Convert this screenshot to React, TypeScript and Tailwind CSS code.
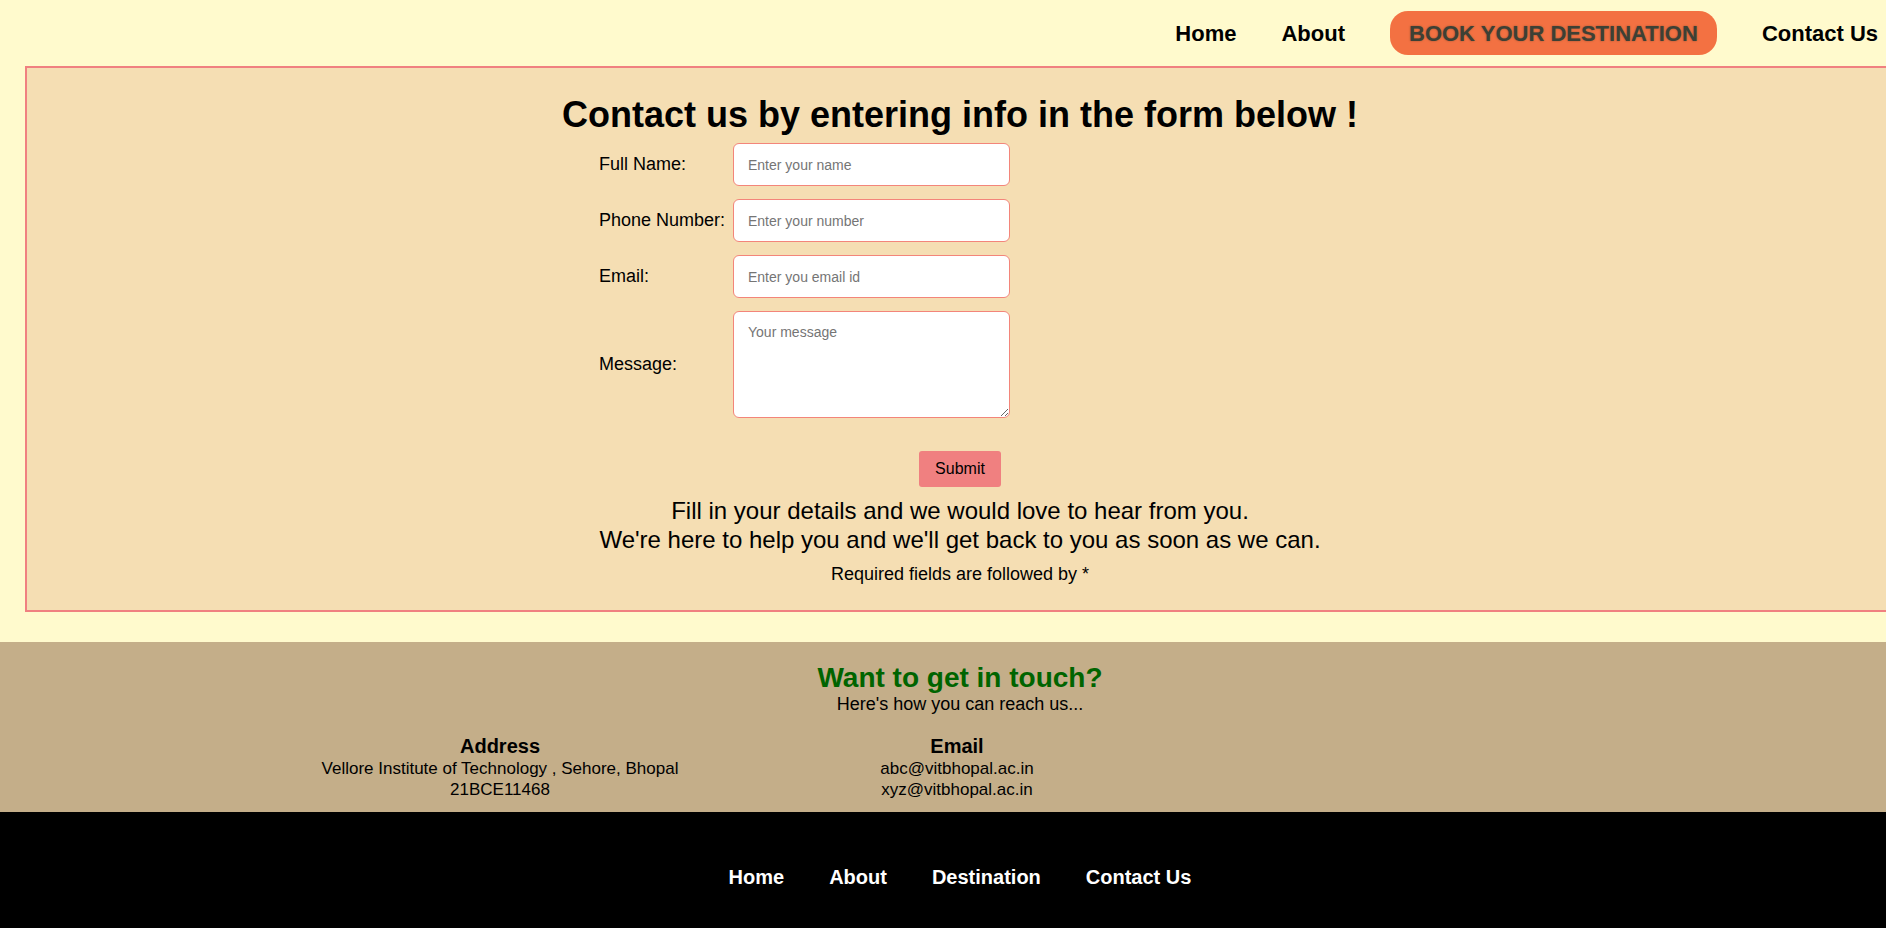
import React from "react";

const navLinks = ["Home", "About"];
const footerLinks = ["Home", "About", "Destination", "Contact Us"];

const fields = [
  { label: "Full Name:", placeholder: "Enter your name", type: "text" },
  { label: "Phone Number:", placeholder: "Enter your number", type: "tel" },
  { label: "Email:", placeholder: "Enter you email id", type: "email" },
];

function Navbar() {
  return (
    <nav className="flex h-[66px] items-center justify-end gap-[45px] pr-[42px]">
      {navLinks.map((link) => (
        <a key={link} href="#" className="text-[22px] font-bold text-black">
          {link}
        </a>
      ))}
      <a
        href="#"
        className="flex h-[44px] items-center rounded-[18px] bg-[#f37142] px-[19px] text-[22px] font-bold text-[#3d4035] [text-shadow:0_0_2px_rgba(60,60,40,0.5)]"
      >
        BOOK YOUR DESTINATION
      </a>
      <a href="#" className="text-[22px] font-bold text-black">
        Contact Us
      </a>
    </nav>
  );
}

function ContactForm() {
  return (
    <section className="mx-[25px] border-2 border-[#f08080] bg-[#f5deb3] pt-[26px] pb-[25px]">
      <h1 className="text-center text-[36px] leading-[41px] font-bold text-black">
        Contact us by entering info in the form below !
      </h1>
      <form
        className="mt-[8px] flex flex-col"
        onSubmit={(e) => {
          e.preventDefault();
        }}
      >
        <div className="ml-[572px] grid grid-cols-[134px_277px] items-center gap-y-[13px]">
          {fields.map((f) => (
            <React.Fragment key={f.label}>
              <label className="text-[18px] text-black">{f.label}</label>
              <input
                type={f.type}
                placeholder={f.placeholder}
                className="h-[43px] w-[277px] rounded-[6px] border border-[#f3857a] bg-white px-[14px] text-[14px] text-black outline-none placeholder:text-[#757575]"
              />
            </React.Fragment>
          ))}
          <label className="text-[18px] text-black">Message:</label>
          <textarea
            placeholder="Your message"
            className="h-[107px] w-[277px] rounded-[6px] border border-[#f3857a] bg-white px-[14px] pt-[10px] text-[14px] text-black outline-none placeholder:text-[#757575]"
          />
        </div>
        <div className="mt-[33px] flex justify-center">
          <button
            type="submit"
            className="h-[36px] w-[82px] rounded-[3px] bg-[#f08080] text-[16px] text-black"
          >
            Submit
          </button>
        </div>
      </form>
      <p className="mt-[9px] text-center text-[24px] leading-[29px] text-black">
        Fill in your details and we would love to hear from you.
        <br />
        We're here to help you and we'll get back to you as soon as we can.
      </p>
      <p className="mt-[10px] text-center text-[18px] leading-[21px] text-black">
        Required fields are followed by *
      </p>
    </section>
  );
}

function ReachUs() {
  return (
    <section className="mt-[30px] h-[170px] bg-[#c4ae89] pt-[20px] text-black">
      <h2 className="text-center text-[28px] leading-[32px] font-bold text-[#006400]">
        Want to get in touch?
      </h2>
      <p className="text-center text-[18px] leading-[21px]">Here's how you can reach us...</p>
      <div className="mt-[20px] ml-[300px] flex gap-[57px]">
        <div className="w-[400px] text-center">
          <h3 className="text-[20px] leading-[23px] font-bold">Address</h3>
          <p className="text-[17px] leading-[21px]">
            Vellore Institute of Technology , Sehore, Bhopal
          </p>
          <p className="text-[17px] leading-[21px]">21BCE11468</p>
        </div>
        <div className="w-[400px] text-center">
          <h3 className="text-[20px] leading-[23px] font-bold">Email</h3>
          <p className="text-[17px] leading-[21px]">abc@vitbhopal.ac.in</p>
          <p className="text-[17px] leading-[21px]">xyz@vitbhopal.ac.in</p>
        </div>
      </div>
    </section>
  );
}

function Footer() {
  return (
    <footer className="flex h-[140px] justify-center gap-[45px] bg-black pt-[54px]">
      {footerLinks.map((link) => (
        <a key={link} href="#" className="h-[23px] text-[20px] leading-[23px] font-bold text-white">
          {link}
        </a>
      ))}
    </footer>
  );
}

export default function App() {
  return (
    <div className="h-[928px] w-full overflow-hidden bg-[#fffacd] font-['Liberation_Sans',Arial,sans-serif]">
      <div className="w-[1920px]">
        <Navbar />
        <ContactForm />
        <ReachUs />
        <Footer />
      </div>
    </div>
  );
}
